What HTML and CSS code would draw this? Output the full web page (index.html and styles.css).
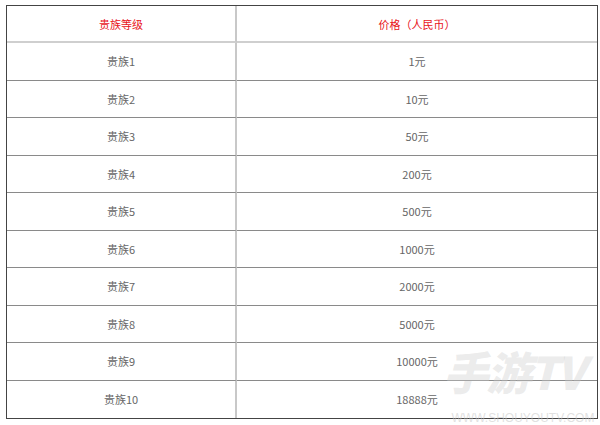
FILE: index.html
```html
<!DOCTYPE html>
<html lang="zh">
<head>
<meta charset="utf-8">
<link rel="stylesheet" href="styles.css">
</head>
<body>
<div class="page">
  <div class="table">
    <div class="cell head left">贵族等级</div>
    <div class="cell head">价格（人民币）</div>
    <div class="cell left">贵族1</div><div class="cell">1元</div>
    <div class="cell left">贵族2</div><div class="cell">10元</div>
    <div class="cell left">贵族3</div><div class="cell">50元</div>
    <div class="cell left">贵族4</div><div class="cell">200元</div>
    <div class="cell left">贵族5</div><div class="cell">500元</div>
    <div class="cell left">贵族6</div><div class="cell">1000元</div>
    <div class="cell left">贵族7</div><div class="cell">2000元</div>
    <div class="cell left">贵族8</div><div class="cell">5000元</div>
    <div class="cell left">贵族9</div><div class="cell">10000元</div>
    <div class="cell left last">贵族10</div><div class="cell last">18888元</div>
  </div>
  <div class="watermark">
    <div class="wm-big">手游TV</div>
    <div class="wm-small">WWW.SHOUYOUTV.COM</div>
  </div>
</div>
</body>
</html>
```
FILE: styles.css
```css
html, body {
  margin: 0;
  padding: 0;
  background: #fff;
}
.page {
  position: relative;
  width: 600px;
  height: 425px;
  overflow: hidden;
  padding: 5px 0 0 6px;
  box-sizing: border-box;
  font-family: "Microsoft YaHei", "Noto Sans CJK SC", "Noto Sans", sans-serif;
}
.table {
  width: 592px;
  height: 414px;
  box-sizing: border-box;
  border: 1px solid #444;
  display: grid;
  grid-template-columns: 230px 1fr;
  grid-template-rows: 37px repeat(10, 1fr);
}
.cell {
  display: flex;
  align-items: center;
  justify-content: center;
  font-size: 11px;
  color: #666;
  border-bottom: 1px solid #8a8a8a;
}
.cell.left {
  border-right: 2px solid #c8c8c8;
}
.cell.head {
  color: #e8141b;
  border-bottom: 2px solid #cfcfcf;
}
.cell.last {
  border-bottom: none;
}
.watermark {
  position: absolute;
  left: 448px;
  top: 341px;
  width: 150px;
  display: flex;
  flex-direction: column;
  align-items: center;
  white-space: nowrap;
  pointer-events: none;
}
.wm-big {
  font-family: "Noto Sans CJK SC", "DejaVu Sans", sans-serif;
  font-weight: 900;
  font-size: 45px;
  line-height: 60px;
  color: rgba(205, 205, 205, 0.4);
  letter-spacing: -2px;
  transform: translateX(-5px) skewX(-14deg);
}
.wm-small {
  font-family: "Liberation Sans", Arial, sans-serif;
  font-size: 12px;
  line-height: 14px;
  color: rgba(200, 200, 200, 0.55);
  margin-top: 10px;
}
```
